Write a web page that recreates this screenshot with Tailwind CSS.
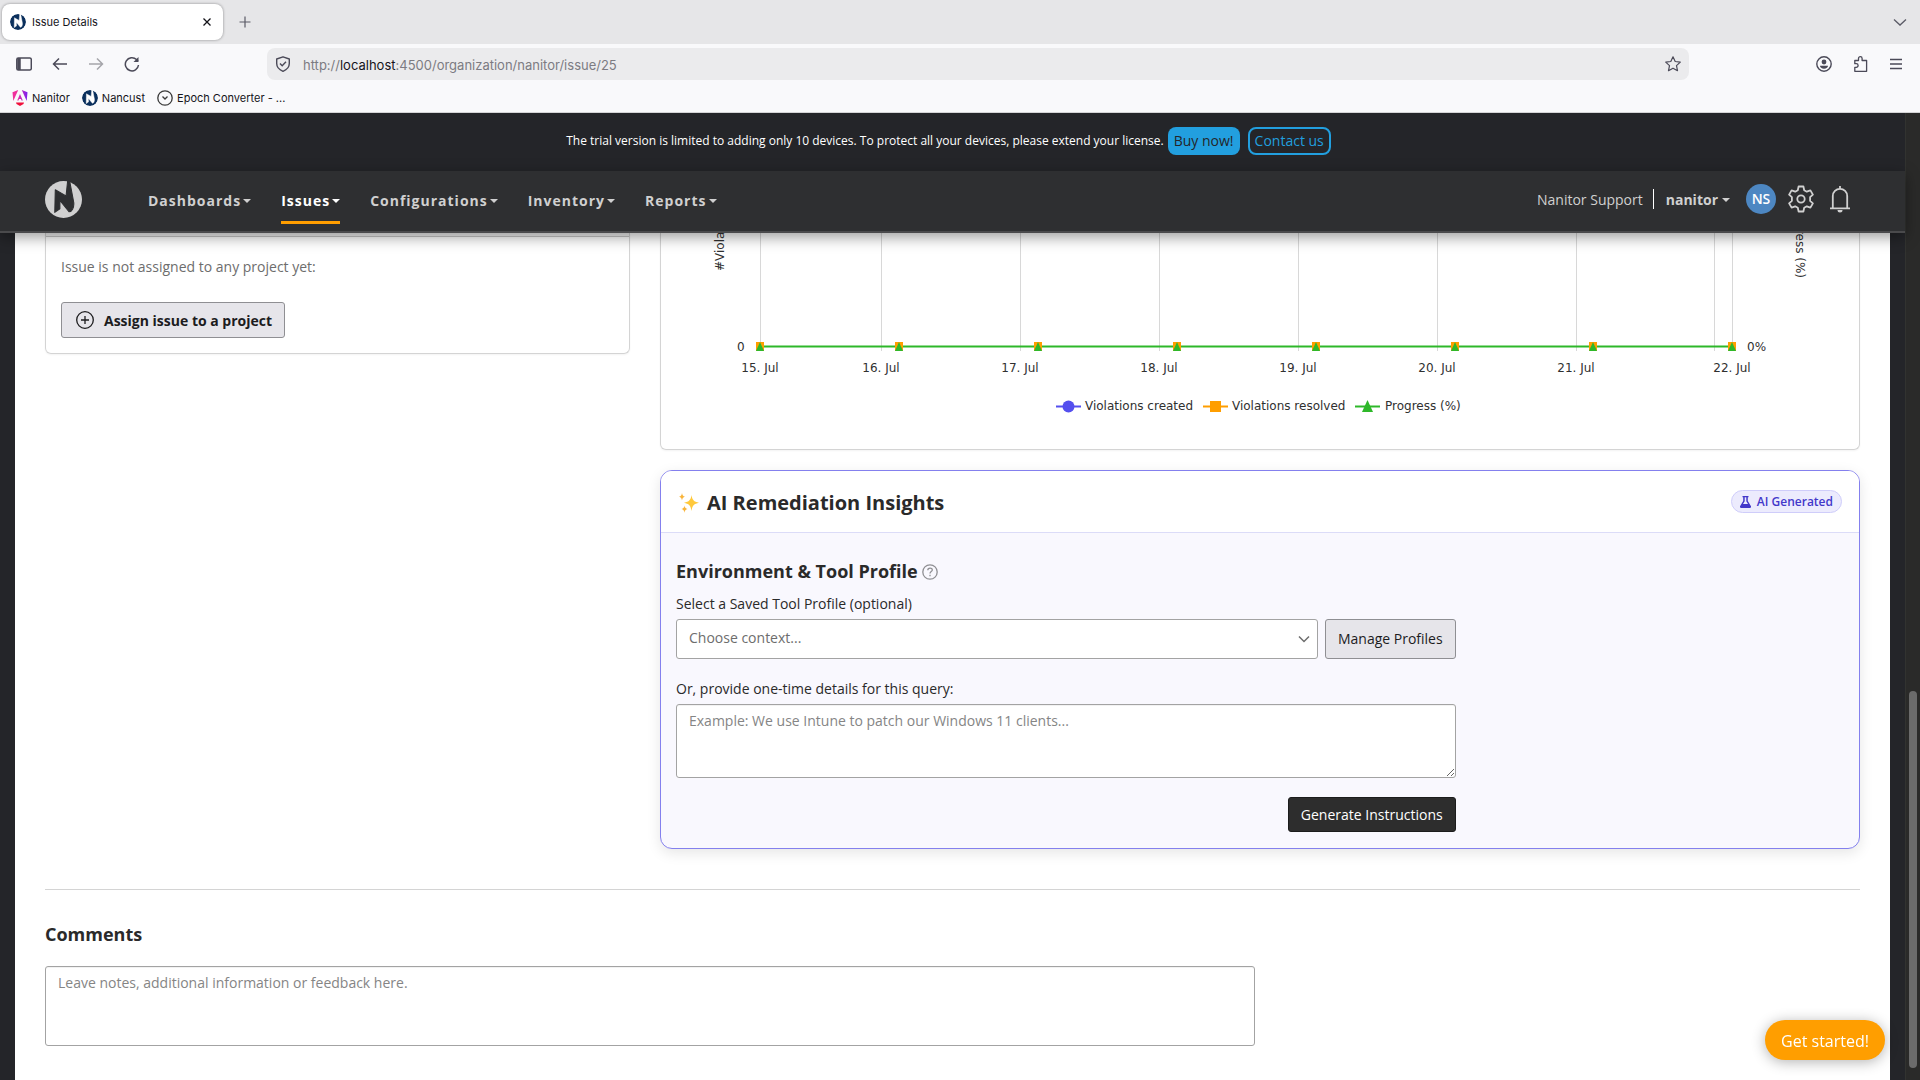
<!DOCTYPE html>
<html lang="en">
<head>
    <meta charset="UTF-8">
    <meta name="viewport" content="width=device-width, initial-scale=1.0">
    <title>Issue Details</title>
    <script src="https://cdn.jsdelivr.net/npm/@tailwindcss/browser@4"></script>
</head>
<body class="flex min-h-screen flex-col bg-[#242529] font-['Open_Sans',sans-serif] text-sm text-[#2a2a2a]">
    <!-- Shared logo shape -->
    <svg class="absolute size-0">
        <symbol id="logo" viewBox="0 0 36 36">
            <mask id="logo-cut">
                <rect width="36" height="36" fill="#fff"/>
                <path d="M10 8.500 L20.500 14.500 L22 0 H24 L28 21 C28.500 26 26 30 23.500 30 L14.500 19 V27 L9.500 30.500 Z" fill="#000" stroke="#000" stroke-width="1" stroke-linejoin="round"/>
            </mask>
            <circle cx="18" cy="18" r="18" fill="currentColor" mask="url(#logo-cut)"/>
        </symbol>
    </svg>

    <!-- Browser window -->
    <header class="border-b border-[#d4d4d6] bg-[#f9f9fb] font-['Inter',sans-serif] text-[11px] text-[#15141a]">
        <div class="flex h-11 items-center bg-[#e6e6e8] pr-3 pl-0.5">
            <div class="flex h-9 w-[221px] items-center rounded-lg bg-white pr-3 pl-2 shadow-[0_0_3px_rgba(0,0,0,0.4)]">
                <svg class="mr-1.5 size-4 rounded-full bg-white text-[#0a2f5c]"><use href="#logo"/></svg>
                <span class="grow pt-0.5">Issue Details</span>
                <button aria-label="Close tab"><svg class="size-2" viewBox="0 0 8 8" fill="none" stroke="currentColor" stroke-width="1.300"><path d="M0.500 0.500l7 7M7.500 0.500l-7 7"/></svg></button>
            </div>
            <button class="ml-4" aria-label="New tab"><svg class="size-3" viewBox="0 0 12 12" fill="none" stroke="#5b5b66" stroke-width="1.200"><path d="M6 0.500v11M0.500 6h11"/></svg></button>
            <button class="ml-auto" aria-label="List all tabs"><svg class="h-4 w-4" viewBox="0 0 16 16" fill="none" stroke="#5b5b66" stroke-width="1.300"><path d="M2 5.500l6 5.500 6-5.500"/></svg></button>
        </div>
        <div class="flex h-10 items-center pr-[18px] pl-4 text-[#4b4a58]">
            <div class="flex w-[251px] items-center gap-5">
                <button aria-label="Show sidebar"><svg class="size-4" viewBox="0 0 16 16" fill="none" stroke="currentColor" stroke-width="1.500"><rect x="0.800" y="2" width="14.500" height="12" rx="1.500"/><path d="M3 2v12" stroke-width="3.500"/></svg></button>
                <button aria-label="Go back"><svg class="size-4" viewBox="0 0 16 16" fill="none" stroke="currentColor" stroke-width="1.500"><path d="M15 8H1.500M7 2.500L1.500 8L7 13.500"/></svg></button>
                <button aria-label="Go forward" class="text-[#a5a5aa]"><svg class="size-4" viewBox="0 0 16 16" fill="none" stroke="currentColor" stroke-width="1.500"><path d="M1 8h13.500M9 2.500L14.500 8L9 13.500"/></svg></button>
                <button aria-label="Reload"><svg class="size-4" viewBox="0 0 16 16" fill="none" stroke="currentColor" stroke-width="1.500"><path d="M14.500 9a6.600 6.600 0 1 1-2-5.500l1.500 1.500"/><path d="M14.500 1v5h-5z" fill="currentColor" stroke="none"/></svg></button>
            </div>
            <div class="flex h-8 w-full max-w-[1422px] items-center rounded-lg bg-[#ebebed] px-2">
                <svg class="size-4" viewBox="0 0 16 16" fill="none" stroke="currentColor" stroke-width="1.400"><path d="M8 0.800L14.300 3v4.500c0 3.500-2.500 6.200-6.300 7.800c-3.800-1.600-6.300-4.300-6.300-7.800V3z" stroke-linejoin="round"/><path d="M5 7.500L7.200 9.800L11 5.800"/></svg>
                <p class="ml-3 grow pt-0.5 text-[13px] text-[#7c7b82]">http://<span class="text-[#15141a]">localhost</span>:4500/organization/nanitor/issue/25</p>
                <button aria-label="Bookmark this page"><svg class="size-4" viewBox="0 0 16 16" fill="none" stroke="currentColor" stroke-width="1.200" stroke-linejoin="round"><path d="M8 0.800l2.200 4.700 5.100.600-3.800 3.500 1 5.100L8 12.200l-4.500 2.500 1-5.100L.700 6.100l5.100-.600z"/></svg></button>
            </div>
            <div class="ml-auto flex items-center gap-[21px]">
                <button aria-label="Account"><svg class="size-4" viewBox="0 0 16 16"><circle cx="8" cy="8" r="7.200" fill="none" stroke="currentColor" stroke-width="1.400"/><circle cx="8" cy="6" r="2.400" fill="currentColor"/><path d="M4 9.700h8c0 1.600-1.600 3-4 3s-4-1.400-4-3z" fill="currentColor"/></svg></button>
                <button aria-label="Extensions"><svg class="size-4" viewBox="0 0 16 16" fill="none" stroke="currentColor" stroke-width="1.300" stroke-linejoin="round"><path d="M5.500 4.500V2.500a1.800 1.800 0 0 1 3.600 0v2h4.500v10.800H1.800v-4h1.500a1.800 1.800 0 0 0 0-3.600H1.800V4.500z"/></svg></button>
                <button aria-label="Menu"><svg class="h-4 w-3" viewBox="0 0 12 16" stroke="currentColor" stroke-width="1.300"><path d="M0 3.500h12M0 8h12M0 12.500h12"/></svg></button>
            </div>
        </div>
        <nav class="flex h-7 items-center gap-3 px-3">
            <a href="#" class="flex items-center gap-1">
                <svg class="size-4" viewBox="0 0 16 16"><defs><linearGradient id="ng" x1="0" x2="1"><stop offset="0.300" stop-color="#f0309c"/><stop offset="1" stop-color="#7a1ff0"/></linearGradient></defs><path d="M9.800 0L15.500 2.300L14.700 11zM6.200 0L.500 2.300L1.300 11zM8 4L10.800 10.500H9.500L9 9H7L6.500 10.500H5.200z" fill="url(#ng)"/><path d="M4 12.500h8L11.500 14L8 16L4.500 14z" fill="#f0103c"/></svg>
                <span class="pt-0.5">Nanitor</span>
            </a>
            <a href="#" class="flex items-center gap-1">
                <svg class="size-4 rounded-full bg-white text-[#0a2f5c]"><use href="#logo"/></svg>
                <span class="pt-0.5">Nancust</span>
            </a>
            <a href="#" class="flex items-center gap-1">
                <svg class="size-4" viewBox="0 0 16 16" fill="none" stroke="#3a3a3a" stroke-width="1.300"><circle cx="8" cy="8" r="7.200"/><path d="M5.500 6.500L8 9L10.500 6.500"/></svg>
                <span class="pt-0.5">Epoch Converter - ...</span>
            </a>
        </nav>
    </header>

    <div class="flex grow">
        <div class="flex min-w-0 grow flex-col">
            <!-- Trial banner -->
            <div class="flex h-[58px] items-center justify-center pr-2 pb-0.5 text-xs text-white">
                <p>The trial version is limited to adding only 10 devices. To protect all your devices, please extend your license.</p>
                <a href="#" class="ml-1 flex h-7 items-center rounded-lg bg-[#229fdf] px-1.5 text-sm text-[#242529]">Buy now!</a>
                <a href="#" class="ml-2 flex h-7 items-center rounded-lg border-2 border-[#229fdf] px-[5px] text-sm text-[#229fdf]">Contact us</a>
            </div>

            <!-- Main nav -->
            <nav class="relative z-10 flex h-[62px] items-center border-b-2 border-[#4a4a4c] bg-[#2e2f31] pr-[54px] pl-[45px] text-[#d0d0d0] shadow-[0_4px_14px_rgba(0,0,0,0.4)]">
                <a href="#" aria-label="Home"><svg class="mb-1 size-[37px]"><use href="#logo"/></svg></a>
                <ul class="ml-[66px] flex h-full gap-[30px] font-bold tracking-[1px]">
                    <li class="flex items-center"><a href="#" class="flex h-[46px] items-center gap-0.5 border-b-3 border-transparent pt-0.5">Dashboards<svg class="h-1 w-2" viewBox="0 0 8 4" fill="currentColor"><path d="M0 0h8L4 4z"/></svg></a></li>
                    <li class="flex items-center"><a href="#" class="flex h-[46px] items-center gap-0.5 border-b-3 border-[#ff9e00] pt-0.5 text-white">Issues<svg class="h-1 w-2" viewBox="0 0 8 4" fill="currentColor"><path d="M0 0h8L4 4z"/></svg></a></li>
                    <li class="flex items-center"><a href="#" class="flex h-[46px] items-center gap-0.5 border-b-3 border-transparent pt-0.5">Configurations<svg class="h-1 w-2" viewBox="0 0 8 4" fill="currentColor"><path d="M0 0h8L4 4z"/></svg></a></li>
                    <li class="flex items-center"><a href="#" class="flex h-[46px] items-center gap-0.5 border-b-3 border-transparent pt-0.5">Inventory<svg class="h-1 w-2" viewBox="0 0 8 4" fill="currentColor"><path d="M0 0h8L4 4z"/></svg></a></li>
                    <li class="flex items-center"><a href="#" class="flex h-[46px] items-center gap-0.5 border-b-3 border-transparent pt-0.5">Reports<svg class="h-1 w-2" viewBox="0 0 8 4" fill="currentColor"><path d="M0 0h8L4 4z"/></svg></a></li>
                </ul>
                <div class="mb-1 ml-auto flex items-center">
                    <span class="pt-0.5">Nanitor Support</span>
                    <span class="mr-3 ml-2.5 h-5 w-px bg-white"></span>
                    <button class="flex items-center gap-1 pt-0.5 font-bold">nanitor<svg class="h-1 w-2" viewBox="0 0 8 4" fill="currentColor"><path d="M0 0h8L4 4z"/></svg></button>
                    <span class="ml-4 flex size-[30px] items-center justify-center rounded-full bg-[#4d87c2] font-semibold text-white">NS</span>
                    <button class="ml-[11px]" aria-label="Settings">
                        <svg class="size-7" viewBox="0 0 28 28" fill="none" stroke="currentColor" stroke-width="1.800" stroke-linejoin="round"><path d="M11.600 1.500h4.800l.800 3.700 2.600 1.500 3.600-1.300 2.500 4.200-2.800 2.500v3.800l2.800 2.500-2.500 4.200-3.600-1.300-2.600 1.500-.800 3.700h-4.800l-.800-3.700-2.600-1.500-3.600 1.300-2.500-4.200 2.800-2.500v-3.800L2.100 9.600l2.500-4.200 3.600 1.300 2.600-1.500z"/><circle cx="14" cy="14" r="3.700"/></svg>
                    </button>
                    <button class="ml-3.5" aria-label="Notifications">
                        <svg class="h-7 w-[22px]" viewBox="0 0 22 28" fill="none" stroke="currentColor" stroke-width="1.800"><path d="M1 23.300h20M3.800 23V11a7.200 7.200 0 0 1 14.400 0v12M11 3.500V1"/><path d="M8.500 25h5a2.500 2.500 0 0 1-5 0z" fill="currentColor" stroke="none"/></svg>
                    </button>
                </div>
            </nav>

            <!-- Page content -->
            <main class="mx-[15px] grow bg-white px-[30px]">
                <div class="grid grid-cols-[585fr_1200fr] items-start gap-[30px]">
                    <!-- Project card -->
                    <section class="rounded-b-md border border-t-0 border-[#d4d4d4] shadow-xs">
                        <div class="h-1 border-b border-[#c8c8c8] bg-[#f4f4f4]"></div>
                        <div class="px-[15px] pt-5 pb-[15px]">
                            <p class="text-[#6d6d6d]">Issue is not assigned to any project yet:</p>
                            <button class="mt-[25px] flex h-9 items-center rounded-[3px] border border-[#8f8f93] bg-[#e6e5ea] px-3 font-bold text-[#1c1c1e]">
                                <svg class="mr-2 size-[22px]" viewBox="0 0 22 22" fill="none" stroke="currentColor" stroke-width="1.300"><circle cx="11" cy="11" r="8.300"/><path d="M11 7v8M7 11h8"/></svg>
                                <span class="pt-0.5">Assign issue to a project</span>
                            </button>
                        </div>
                    </section>

                    <div>
                        <!-- Violations chart -->
                        <section class="rounded-b-md border border-t-0 border-[#d4d4d4] shadow-xs">
                            <svg class="block w-full font-['DejaVu_Sans',sans-serif] text-xs" viewBox="0 0 1198 216" fill="#303030">
                                <g stroke="#d8d8d8">
                                    <path d="M99.500 0V118M220.500 0V118M359.500 0V118M498.500 0V118M637.500 0V118M776.500 0V118M915.500 0V118M1053.500 0V118M1071.500 0V118"/>
                                </g>
                                <text transform="translate(63 38) rotate(-90)">#Violations</text>
                                <text transform="translate(1135 45) rotate(90)" text-anchor="end">Progress (%)</text>
                                <path d="M99 113.500H1071" stroke="#2eb82a" stroke-width="2"/>
                                <g id="markers"></g>
                                <text x="76" y="118">0</text>
                                <text x="1086" y="118">0%</text>
                                <g text-anchor="middle">
                                    <text x="99" y="139">15. Jul</text>
                                    <text x="220" y="139">16. Jul</text>
                                    <text x="359" y="139">17. Jul</text>
                                    <text x="498" y="139">18. Jul</text>
                                    <text x="637" y="139">19. Jul</text>
                                    <text x="776" y="139">20. Jul</text>
                                    <text x="915" y="139">21. Jul</text>
                                    <text x="1071" y="139">22. Jul</text>
                                </g>
                                <path d="M395 173.500h25" stroke="#544fee" stroke-width="2"/>
                                <circle cx="407.500" cy="173.500" r="6" fill="#544fee"/>
                                <text x="424" y="177">Violations created</text>
                                <path d="M542 173.500h25" stroke="#ff9e00" stroke-width="2"/>
                                <rect x="549" y="168" width="11" height="11" fill="#ff9e00"/>
                                <text x="571" y="177">Violations resolved</text>
                                <path d="M694 173.500h25" stroke="#2eb82a" stroke-width="2"/>
                                <path d="M706.500 167l5.500 12h-11z" fill="#2eb82a"/>
                                <text x="724" y="177">Progress (%)</text>
                            </svg>
                        </section>

                        <!-- AI insights -->
                        <section class="mt-5 overflow-hidden rounded-xl border border-[#8480ee] bg-[#f9f8fe] shadow-[0_4px_14px_rgba(0,0,0,0.1)]">
                            <div class="flex h-[62px] items-center justify-between border-b border-[#dcdcf8] bg-white pr-[17px] pl-[18px]">
                                <h2 class="flex items-center gap-2 pt-0.5 text-xl font-bold">
                                    <svg class="size-5" viewBox="0 0 20 20" fill="#ffc93c"><path d="M12.500 2c.800 5 2.200 6.700 7.500 7.800-5.300 1.100-6.700 2.900-7.500 8.200-.800-5.300-2.200-7.100-7.500-8.200 5.300-1.100 6.700-2.800 7.500-7.800z"/><path d="M3 0c.400 2.500 1 3.200 3 3.800C4 4.400 3.400 5.200 3 7.600 2.600 5.200 2 4.400 0 3.800 2 3.200 2.600 2.500 3 0zM5.500 12.500c.400 2.200 1 2.900 3 3.500-2 .600-2.600 1.500-3 3.700-.400-2.200-1-3.100-3-3.700 2-.600 2.600-1.300 3-3.500z" fill="#f9b43a"/></svg>
                                    AI Remediation Insights
                                </h2>
                                <span class="flex h-[23px] items-center gap-1.5 rounded-full border border-[#cfcdfa] bg-[#ecebfd] px-2 text-xs font-semibold text-[#4338ca]">
                                    <svg class="h-3 w-[11px]" viewBox="0 0 11 12" fill="currentColor"><path d="M2.500 0h6v1.300h-.700V5L11 10.300C11.300 11.200 10.700 12 9.800 12H1.200C.300 12-.300 11.200 0 10.300L3.200 5V1.300h-.700zM4.700 1.300v4L3 8h5L6.300 5.300v-4z"/></svg>
                                    AI Generated
                                </span>
                            </div>
                            <form class="flex w-2/3 min-w-[780px] flex-col pt-[26px] pr-1 pb-4 pl-[15px]">
                                <h3 class="flex h-6 items-center gap-1 text-lg font-bold">
                                    Environment &amp; Tool Profile
                                    <svg class="mt-0.5 size-4" viewBox="0 0 16 16" fill="none" stroke="#8f8f93" stroke-width="1.300"><circle cx="8" cy="8" r="7.200"/><path d="M5.800 6.300c0-3 4.500-2.800 4.500-.300 0 1.700-2.300 1.500-2.300 3.500M8 10.800v1.500"/></svg>
                                </h3>
                                <label for="profile" class="mt-[11px] leading-5">Select a Saved Tool Profile (optional)</label>
                                <div class="mt-[5px] flex gap-[7px]">
                                    <div class="relative grow">
                                        <select id="profile" class="h-10 w-full appearance-none rounded-[3px] border border-[#a3a3a3] bg-white px-3 pb-0.5 text-[#6d6d6d]">
                                            <option>Choose context...</option>
                                        </select>
                                        <svg class="pointer-events-none absolute top-4 right-2 h-2 w-3" viewBox="0 0 12 8" fill="none" stroke="#6d6d6d" stroke-width="1.500"><path d="M1 1.500L6 6.500L11 1.500"/></svg>
                                    </div>
                                    <button type="button" class="h-10 rounded-[3px] border border-[#8f8f93] bg-[#e6e5ea] px-3 text-[#1c1c1e]">Manage Profiles</button>
                                </div>
                                <label for="details" class="mt-5 leading-5">Or, provide one-time details for this query:</label>
                                <textarea id="details" class="mt-[5px] h-[74px] resize-y rounded-[3px] border border-[#a3a3a3] bg-white px-3 py-1.5 inset-shadow-2xs placeholder:text-[#858585]" placeholder="Example: We use Intune to patch our Windows 11 clients..."></textarea>
                                <button type="button" class="mt-[19px] h-[35px] self-end rounded-[3px] border border-[#1c1c1c] bg-[#2d2d2d] px-3 text-white">Generate Instructions</button>
                            </form>
                        </section>
                    </div>
                </div>

                <!-- Comments -->
                <section class="mt-10 border-t border-[#d4d4d4] pt-[30px] pb-8">
                    <h2 class="text-lg font-bold"><label for="comment">Comments</label></h2>
                    <textarea id="comment" class="mt-[18px] block h-20 w-2/3 resize-none rounded-[3px] border border-[#a3a3a3] bg-white px-3 py-1.5 inset-shadow-2xs placeholder:text-[#858585]" placeholder="Leave notes, additional information or feedback here."></textarea>
                </section>
            </main>
        </div>

        <!-- Scrollbar -->
        <div class="flex w-[15px] shrink-0 flex-col items-center justify-end border-l border-[#323330] bg-[#2a2a29] pb-3">
            <div class="h-[377px] w-2 rounded-full bg-[#6b6b6b]"></div>
        </div>
    </div>

    <button class="fixed right-[35px] bottom-5 z-20 h-10 rounded-full bg-[#ff9e00] px-4 pt-0.5 text-base text-white shadow-[0_2px_14px_rgba(0,0,0,0.3)]">Get started!</button>

    <script>
        // One orange square with a green triangle for each day
        const days = [99, 238, 377, 516, 655, 794, 932, 1071];
        document.getElementById('markers').innerHTML = days.map(x =>
            `<rect x="${x - 4}" y="109" width="8" height="9" fill="#ff9e00"/>
             <path d="M${x} 109l4 9h-8z" fill="#2eb82a"/>`
        ).join('');
    </script>
</body>
</html>
